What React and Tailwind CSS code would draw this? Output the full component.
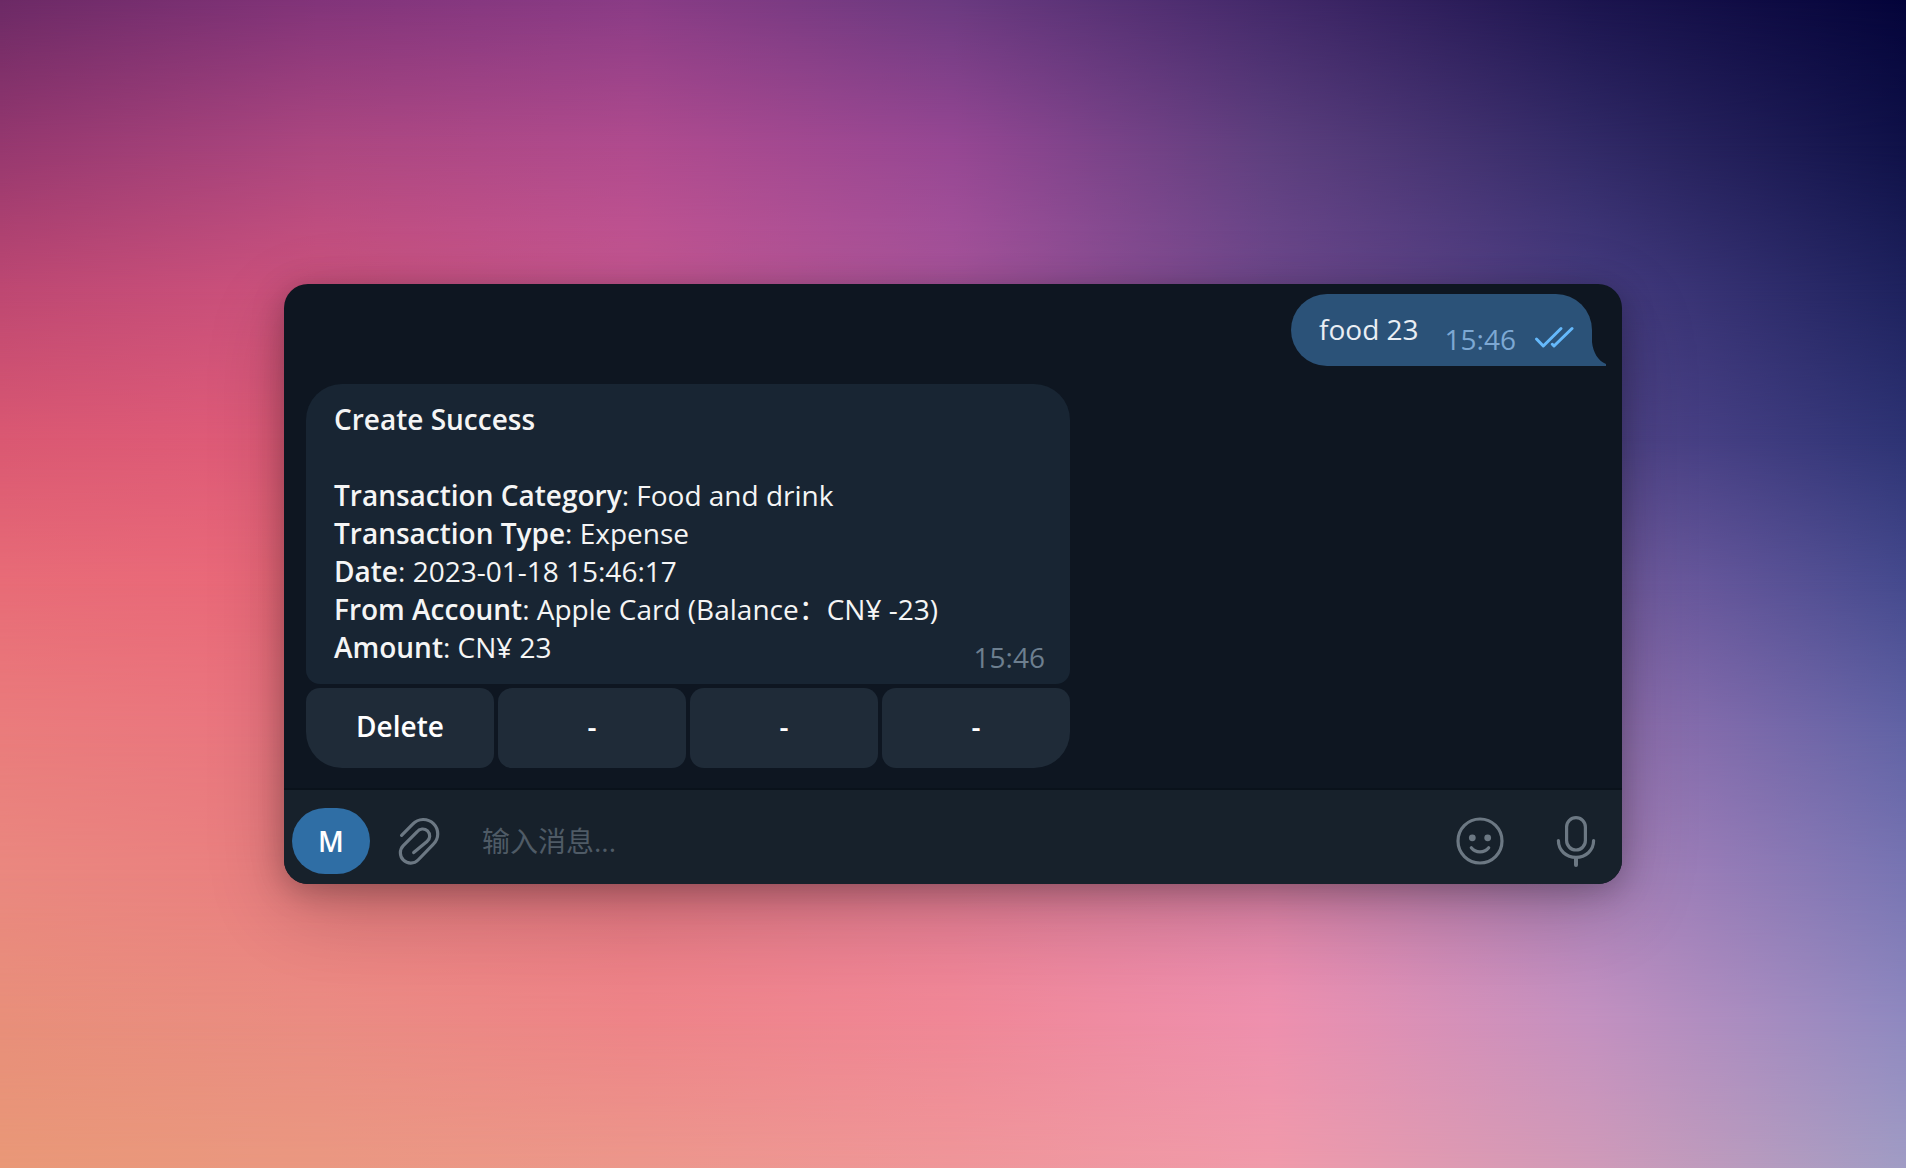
const ROWS = [
  { at: 0, colors: ["#6c2a66", "#82347a", "#8a3c86", "#6b3a80", "#43296a", "#1c154f", "#04043a"] },
  { at: 12.5, colors: ["#96386f", "#ac4780", "#b04b8e", "#964793", "#5d3f7e", "#322a67", "#0f1148"] },
  { at: 25, colors: ["#be4872", "#ce537e", "#c75792", "#a9559c", "#70498e", "#463c80", "#1e225e"] },
  { at: 37.5, colors: ["#da5872", "#e05c7a", "#d0688c", "#b060a0", "#7a4c98", "#54468c", "#2d3374"] },
  { at: 50, colors: ["#e86c77", "#ea687a", "#d97088", "#c070a0", "#9060a0", "#785ea2", "#454a8e"] },
  { at: 62.5, colors: ["#ea7c7c", "#ea7480", "#e07488", "#d078a0", "#b070a8", "#9671b0", "#6163a5"] },
  { at: 75, colors: ["#ea887f", "#ea7e80", "#e67884", "#e67e96", "#de84aa", "#ac82ba", "#7875b3"] },
  { at: 87.5, colors: ["#e88f7a", "#ea8c82", "#ee8488", "#f08796", "#ee90ae", "#c491c0", "#8f89c0"] },
  { at: 100, colors: ["#e99877", "#ea9881", "#ec978b", "#ef9699", "#f09aaa", "#d09ab8", "#a09cc4"] },
];

function Wallpaper() {
  return (
    <div aria-hidden="true" className="absolute inset-0 -z-10 overflow-hidden">
      {ROWS.map((row, i) => (
        <div
          key={row.at}
          className="absolute inset-0"
          style={{
            backgroundImage: `linear-gradient(to right, ${row.colors.join(", ")})`,
            maskImage: i
              ? `linear-gradient(to bottom, transparent ${ROWS[i - 1].at}%, black ${row.at}%)`
              : undefined,
          }}
        />
      ))}
    </div>
  );
}

function Checks() {
  return (
    <svg viewBox="0 0 40 24" className="h-6 w-10" fill="none" stroke="currentColor" strokeWidth="3" strokeLinecap="round" strokeLinejoin="round" aria-label="Read">
      <path d="M2.5 13 L9.3 20 L27 2.5" />
      <path d="M18.3 18.3 L20 20 L38 2.5" />
    </svg>
  );
}

function Paperclip() {
  return (
    <svg viewBox="0 0 44 50" className="h-[50px] w-11" fill="none" stroke="currentColor" strokeWidth="3.2" strokeLinecap="round" strokeLinejoin="round" aria-hidden="true">
      <path d="M3.6 19.4 L14.7 8.2 A14.4 14.4 0 1 1 35.2 28.4 L20.1 44 A10.3 10.3 0 1 1 5.3 29.6 L19 15.9 A7 7 0 1 1 29 25.5 L15.7 36.6" />
    </svg>
  );
}

function Smiley() {
  return (
    <svg viewBox="0 0 50 50" className="size-[50px]" fill="none" stroke="currentColor" strokeWidth="3.2" strokeLinecap="round" aria-hidden="true">
      <circle cx="25" cy="25" r="22" />
      <circle cx="17.3" cy="21.8" r="3.4" fill="currentColor" stroke="none" />
      <circle cx="32.7" cy="21.8" r="3.4" fill="currentColor" stroke="none" />
      <path d="M16.3 31.8 C20.5 37.2 29.5 37.2 33.7 31.8" />
    </svg>
  );
}

function Microphone() {
  return (
    <svg viewBox="0 0 42 54" className="h-[54px] w-[42px]" fill="none" stroke="currentColor" strokeWidth="3.2" strokeLinecap="round" aria-hidden="true">
      <rect x="11.6" y="3.6" width="18.8" height="32.4" rx="9.4" />
      <path d="M3.4 26.6 C3.4 36.6 11.4 43.4 21 43.4 C30.6 43.4 38.6 36.6 38.6 26.6" />
      <path d="M21 44 V51" strokeWidth="4" />
    </svg>
  );
}

const DETAILS = [
  ["Transaction Category", "Food and drink"],
  ["Transaction Type", "Expense"],
  ["Date", "2023-01-18 15:46:17"],
  ["From Account", "Apple Card (Balance：CN¥ -23)"],
  ["Amount", "CN¥ 23"],
];

const ACTION = "h-20 rounded-[14px] bg-[#1f2b38] pb-1 font-semibold text-white";

export default function App() {
  return (
    <div className="relative isolate flex min-h-screen items-center px-[284px] font-['Open_Sans','Noto_Sans_CJK_SC',sans-serif] text-[28px] leading-[38px] text-[#f5f5f5]">
      <Wallpaper />
      <main className="min-w-0 flex-1 overflow-hidden rounded-3xl bg-[#0e1621] shadow-[0_6px_32px_rgba(0,0,0,0.26),0_24px_80px_rgba(0,0,0,0.2)]">
        <section className="pt-2.5 pr-[30px] pb-5 pl-[22px]">
          <div className="relative ml-auto flex h-[72px] w-fit rounded-[36px] rounded-br-none bg-[#2b5278] pr-[18px] pl-7">
            <p className="pt-4 text-[#e9eef4]">food 23</p>
            <time className="ml-[26px] self-end pb-2 text-[#7da8d3]">15:46</time>
            <span className="ml-[18px] self-end pb-4 text-[#65b9fb]">
              <Checks />
            </span>
            <svg viewBox="0 0 14 24" className="absolute bottom-0 left-full h-6 w-3.5 fill-[#2b5278]" aria-hidden="true">
              <path d="M0 0 C1 10 6 19 14 22 V24 H0 Z" />
            </svg>
          </div>

          <article className="mt-[18px] w-[764px] max-w-full">
            <div className="relative rounded-t-[36px] rounded-b-[14px] bg-[#182533] px-7 pt-4 pb-[18px]">
              <h1 className="mb-[38px] font-semibold">Create Success</h1>
              {DETAILS.map(([label, value]) => (
                <p key={label}>
                  <strong className="font-semibold">{label}</strong>: {value}
                </p>
              ))}
              <time className="absolute right-[25px] bottom-2 text-[#6d7f8f]">15:46</time>
            </div>
            <div className="mt-1 grid grid-cols-4 gap-1">
              <button type="button" className={`${ACTION} rounded-bl-[36px]`}>Delete</button>
              <button type="button" className={ACTION}>-</button>
              <button type="button" className={ACTION}>-</button>
              <button type="button" className={`${ACTION} rounded-br-[36px]`}>-</button>
            </div>
          </article>
        </section>

        <form className="flex h-24 items-center border-t-2 border-[#0a121b] bg-[#17212b] pt-2 pr-[25px] pl-2 text-[#6c7883]">
          <button type="button" className="h-[66px] w-[78px] rounded-[33px] bg-[#2f6ea5] font-semibold text-white">M</button>
          <button type="button" aria-label="Attach file" className="ml-7">
            <Paperclip />
          </button>
          <input
            type="text"
            aria-label="输入消息"
            placeholder="输入消息..."
            className="ml-10 h-[38px] min-w-0 flex-1 bg-transparent outline-none placeholder:text-[#4f5b66]"
          />
          <button type="button" aria-label="Emoji">
            <Smiley />
          </button>
          <button type="button" aria-label="Record voice message" className="ml-[50px]">
            <Microphone />
          </button>
        </form>
      </main>
    </div>
  );
}
